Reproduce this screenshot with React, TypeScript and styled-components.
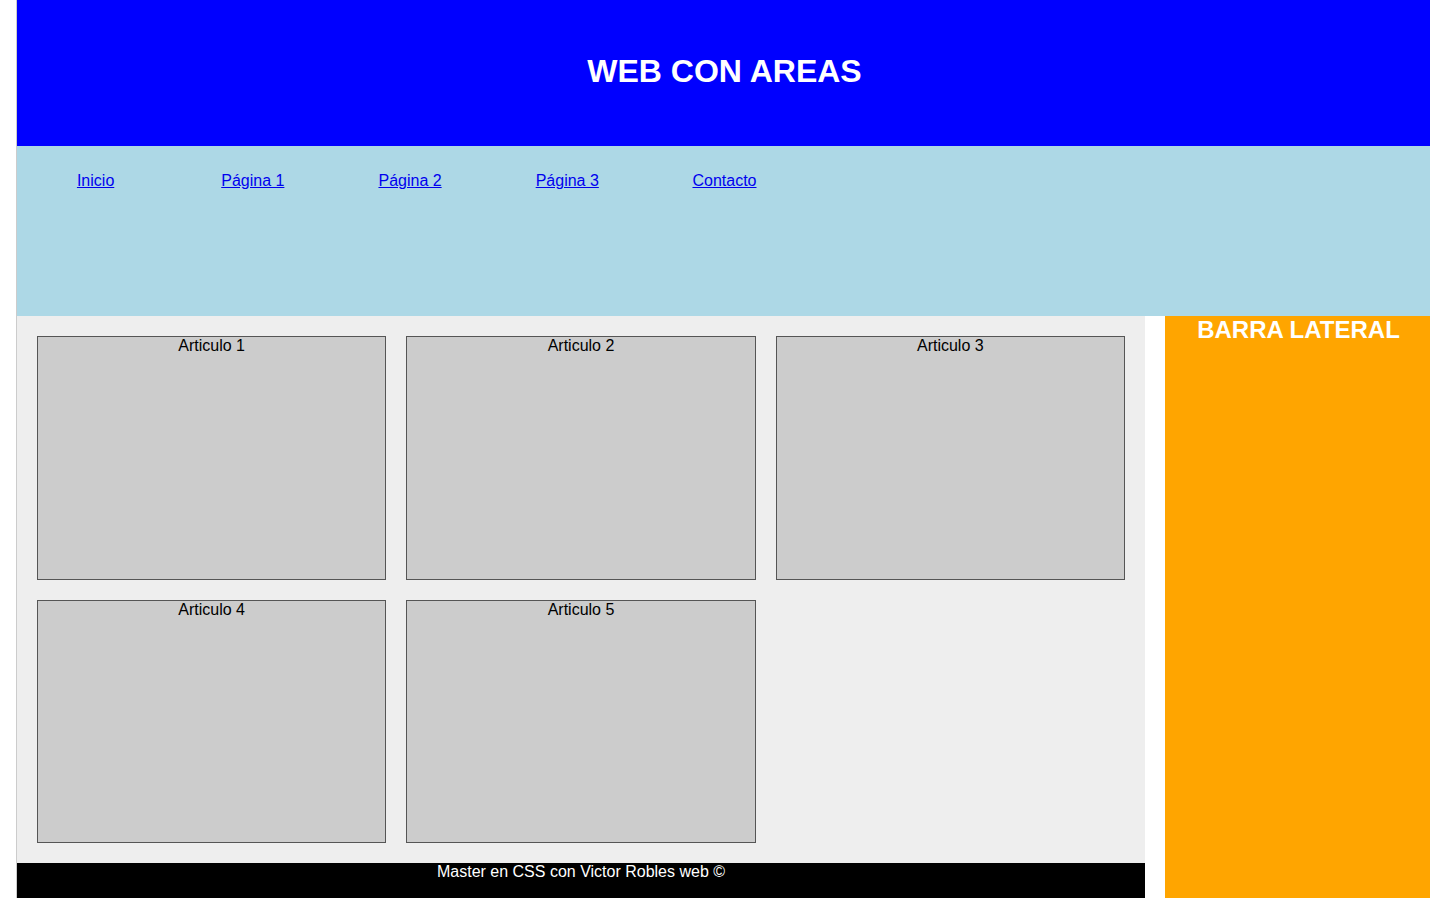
import React from 'react';
import styled, { createGlobalStyle } from 'styled-components';

const GlobalStyle = createGlobalStyle`
  * {
    box-sizing: border-box;
  }

  html {
    background: #fff;
  }

  body {
    margin: 0;
    overflow-x: hidden;
    font-family: Arial, 'Liberation Sans', sans-serif;
    font-size: 16px;
    line-height: 18px;
    color: #000;
  }
`;

const Page = styled.div`
  display: grid;
  grid-template-columns: repeat(5, minmax(0, 1fr));
  grid-template-rows: 146px 170px auto 1fr;
  grid-template-areas:
    'header header header header header'
    'nav nav nav nav nav'
    'content content content content sidebar'
    'footer footer footer footer sidebar';
  column-gap: 20px;
  min-height: 100vh;
  margin: 0 -2px 0 16px;
  border-left: 1px solid #ccc;
  text-align: center;
`;

const Header = styled.header`
  grid-area: header;
  padding-top: 53px;
  background: blue;
  color: #fff;
`;

const Title = styled.h1`
  margin: 0;
  font-size: 32px;
  line-height: 36px;
`;

const Nav = styled.nav`
  grid-area: nav;
  background: lightblue;
`;

const Menu = styled.ul`
  display: grid;
  grid-template-columns: repeat(9, minmax(0, 1fr));
  margin: 0;
  padding: 26px 0 0;
  list-style: none;
`;

const MenuLink = styled.a`
  color: #0000ee;
  text-decoration: underline;
`;

const Content = styled.main`
  grid-area: content;
  display: grid;
  grid-template-columns: repeat(3, minmax(0, 1fr));
  grid-auto-rows: 1fr;
  gap: 20px;
  min-height: 547px;
  padding: 20px;
  background: #eee;
`;

const Article = styled.article`
  border: 1px solid #555;
  background: #ccc;
`;

const Sidebar = styled.aside`
  grid-area: sidebar;
  background: orange;
  color: #fff;
`;

const SidebarTitle = styled.h2`
  margin: 0;
  font-size: 24px;
  line-height: 28px;
`;

const Footer = styled.footer`
  grid-area: footer;
  min-height: 35px;
  background: #000;
  color: #fff;
`;

const links = ['Inicio', 'Página 1', 'Página 2', 'Página 3', 'Contacto'];
const articles = ['Articulo 1', 'Articulo 2', 'Articulo 3', 'Articulo 4', 'Articulo 5'];

export default function App() {
  return (
    <>
      <GlobalStyle />
      <Page>
        <Header>
          <Title>WEB CON AREAS</Title>
        </Header>
        <Nav>
          <Menu>
            {links.map((label) => (
              <li key={label}>
                <MenuLink href="#">{label}</MenuLink>
              </li>
            ))}
          </Menu>
        </Nav>
        <Content>
          {articles.map((label) => (
            <Article key={label}>{label}</Article>
          ))}
        </Content>
        <Sidebar>
          <SidebarTitle>BARRA LATERAL</SidebarTitle>
        </Sidebar>
        <Footer>Master en CSS con Victor Robles web ©</Footer>
      </Page>
    </>
  );
}
